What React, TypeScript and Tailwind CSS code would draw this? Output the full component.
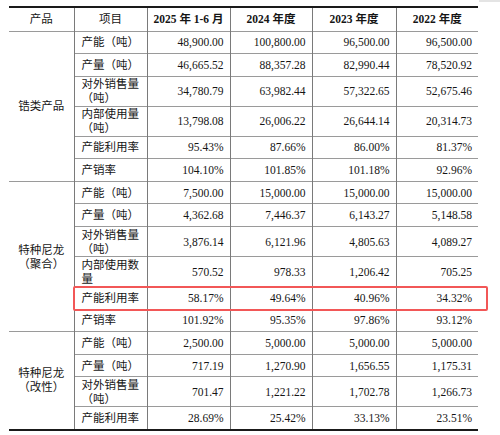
import React from 'react'

type Row = { item: React.ReactNode; tall?: boolean; values: string[] }
type Group = { product: React.ReactNode; rows: Row[] }

const GROUPS: Group[] = [
  {
    product: '锆类产品',
    rows: [
      { item: '产能（吨）', values: ['48,900.00', '100,800.00', '96,500.00', '96,500.00'] },
      { item: '产量（吨）', values: ['46,665.52', '88,357.28', '82,990.44', '78,520.92'] },
      { item: <>对外销售量<br />（吨）</>, tall: true, values: ['34,780.79', '63,982.44', '57,322.65', '52,675.46'] },
      { item: <>内部使用量<br />（吨）</>, tall: true, values: ['13,798.08', '26,006.22', '26,644.14', '20,314.73'] },
      { item: '产能利用率', values: ['95.43%', '87.66%', '86.00%', '81.37%'] },
      { item: '产销率', values: ['104.10%', '101.85%', '101.18%', '92.96%'] },
    ],
  },
  {
    product: <>特种尼龙<br />（聚合）</>,
    rows: [
      { item: '产能（吨）', values: ['7,500.00', '15,000.00', '15,000.00', '15,000.00'] },
      { item: '产量（吨）', values: ['4,362.68', '7,446.37', '6,143.27', '5,148.58'] },
      { item: <>对外销售量<br />（吨）</>, tall: true, values: ['3,876.14', '6,121.96', '4,805.63', '4,089.27'] },
      { item: <>内部使用数<br />量</>, tall: true, values: ['570.52', '978.33', '1,206.42', '705.25'] },
      { item: '产能利用率', values: ['58.17%', '49.64%', '40.96%', '34.32%'] },
      { item: '产销率', values: ['101.92%', '95.35%', '97.86%', '93.12%'] },
    ],
  },
  {
    product: <>特种尼龙<br />（改性）</>,
    rows: [
      { item: '产能（吨）', values: ['2,500.00', '5,000.00', '5,000.00', '5,000.00'] },
      { item: '产量（吨）', values: ['717.19', '1,270.90', '1,656.55', '1,175.31'] },
      { item: <>对外销售量<br />（吨）</>, tall: true, values: ['701.47', '1,221.22', '1,702.78', '1,266.73'] },
      { item: '产能利用率', values: ['28.69%', '25.42%', '33.13%', '23.51%'] },
    ],
  },
]

const YEARS = ['2025 年 1-6 月', '2024 年度', '2023 年度', '2022 年度']

export default function App() {
  return (
    <div
      className="relative w-[500px] h-[435px] bg-white text-[#151515] text-[11.5px] leading-[14px]"
      style={{ fontFamily: '"Liberation Serif", "Noto Sans CJK SC", serif' }}
    >
      <div className="absolute right-0 top-0 w-[21px] h-[2px] bg-[#e4e4e4]" />

      <div className="pl-[9px] pt-[6px]">
        <table className="table-fixed border-collapse w-[469px]">
          <colgroup>
            <col className="w-[65px]" />
            <col className="w-[73px]" />
            <col className="w-[83px]" />
            <col className="w-[82px]" />
            <col className="w-[84px]" />
            <col className="w-[82px]" />
          </colgroup>
          <thead>
            <tr className="h-[24px] border-t-2 border-b border-t-[#1a1a1a] border-b-[#9a9a9a]">
              <th className="font-normal text-center border-r border-[#7a7a7a]">产品</th>
              <th className="font-normal text-center border-r border-[#7a7a7a]">项目</th>
              {YEARS.map((y, i) => (
                <th key={y} className={`font-bold text-center ${i < 3 ? 'border-r border-[#7a7a7a]' : ''}`}>
                  {y}
                </th>
              ))}
            </tr>
          </thead>
          <tbody>
            {GROUPS.map((g, gi) =>
              g.rows.map((r, ri) => (
                <tr
                  key={`${gi}-${ri}`}
                  className={`${r.tall ? 'h-[30px]' : 'h-[22.6px]'} border-b ${
                    gi === GROUPS.length - 1 && ri === g.rows.length - 1
                      ? 'border-b-2 border-b-[#1a1a1a]'
                      : 'border-b-[#9a9a9a]'
                  }`}
                >
                  {ri === 0 && (
                    <td rowSpan={g.rows.length} className="text-center align-middle border-r border-[#7a7a7a]">
                      {g.product}
                    </td>
                  )}
                  <td className="pl-[7px] pr-[2px] text-left align-middle border-r border-[#7a7a7a] whitespace-nowrap">
                    {r.item}
                  </td>
                  {r.values.map((v, vi) => (
                    <td
                      key={vi}
                      className={`pr-[6px] text-right align-middle ${vi < 3 ? 'border-r border-[#7a7a7a]' : ''}`}
                    >
                      {v}
                    </td>
                  ))}
                </tr>
              ))
            )}
          </tbody>
        </table>
      </div>

      <div className="absolute left-[73px] top-[286px] w-[415px] h-[25px] border-2 border-[#f25757] rounded-[2px]" />
    </div>
  )
}
